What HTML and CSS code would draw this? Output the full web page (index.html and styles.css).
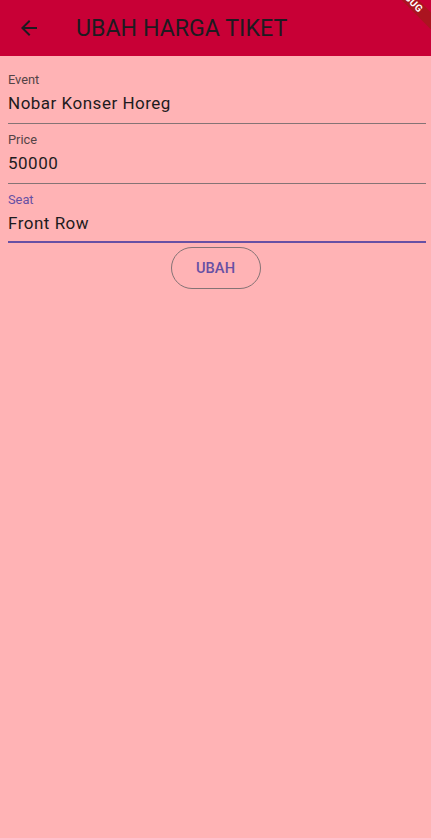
FILE: index.html
```html
<!DOCTYPE html>
<html>
<head>
<meta charset="utf-8">
<link rel="stylesheet" href="styles.css">
</head>
<body>
<header class="appbar">
  <button class="back" aria-label="Back">
    <svg width="24" height="24" viewBox="0 0 24 24"><path d="M20 11H7.83l5.59-5.59L12 4l-8 8 8 8 1.41-1.41L7.83 13H20v-2z" fill="#1d1b20"/></svg>
  </button>
  <h1 class="title">UBAH HARGA TIKET</h1>
  <div class="debug">DEBUG</div>
</header>
<main class="content">
  <div class="field">
    <label class="label">Event</label>
    <div class="value">Nobar Konser Horeg</div>
  </div>
  <div class="field">
    <label class="label">Price</label>
    <div class="value">50000</div>
  </div>
  <div class="field focused">
    <label class="label">Seat</label>
    <div class="value">Front Row</div>
  </div>
  <div class="actions">
    <button class="outlined">UBAH</button>
  </div>
</main>
</body>
</html>
```
FILE: styles.css
```css
* { box-sizing: border-box; }
html, body { margin: 0; padding: 0; }
body {
  background: #ffb3b5;
  font-family: Roboto, "Noto Sans", sans-serif;
  width: 431px;
  min-height: 838px;
  overflow: hidden;
}
.appbar {
  position: relative;
  height: 56px;
  background: #c80036;
  display: flex;
  align-items: center;
  overflow: hidden;
}
.back {
  width: 24px;
  height: 24px;
  margin-left: 17px;
  padding: 0;
  border: 0;
  background: none;
  display: flex;
}
.title {
  margin: 0 0 0 35px;
  font-size: 23.2px;
  font-weight: 400;
  color: #1d1b20;
  letter-spacing: 0;
}
.debug {
  position: absolute;
  left: 349px;
  top: -7px;
  width: 120px;
  height: 12px;
  background: #ab1420;
  color: #fff;
  font-size: 10px;
  font-weight: 700;
  line-height: 12px;
  text-align: center;
  letter-spacing: 0.3px;
  transform: rotate(45deg);
}
.content {
  padding: 8px 5px 0 8px;
}
.field {
  padding: 7px 0 7px;
  border-bottom: 1px solid #857375;
}
.field.focused {
  border-bottom: 2px solid #6750a4;
  padding-bottom: 5px;
}
.label {
  display: block;
  font-size: 12.8px;
  line-height: 17px;
  color: #534346;
}
.focused .label { color: #6750a4; }
.value {
  margin-top: 3px;
  font-size: 17px;
  line-height: 25px;
  color: #1d1b20;
  letter-spacing: 0.5px;
}
.actions {
  display: flex;
  justify-content: center;
  padding-top: 4px;
  padding-right: 3px;
}
.outlined {
  width: 90px;
  height: 42px;
  border: 1px solid #857375;
  border-radius: 21px;
  background: transparent;
  color: #6750a4;
  font-family: Roboto, sans-serif;
  font-size: 14.6px;
  font-weight: 500;
  letter-spacing: 0.1px;
}
```
